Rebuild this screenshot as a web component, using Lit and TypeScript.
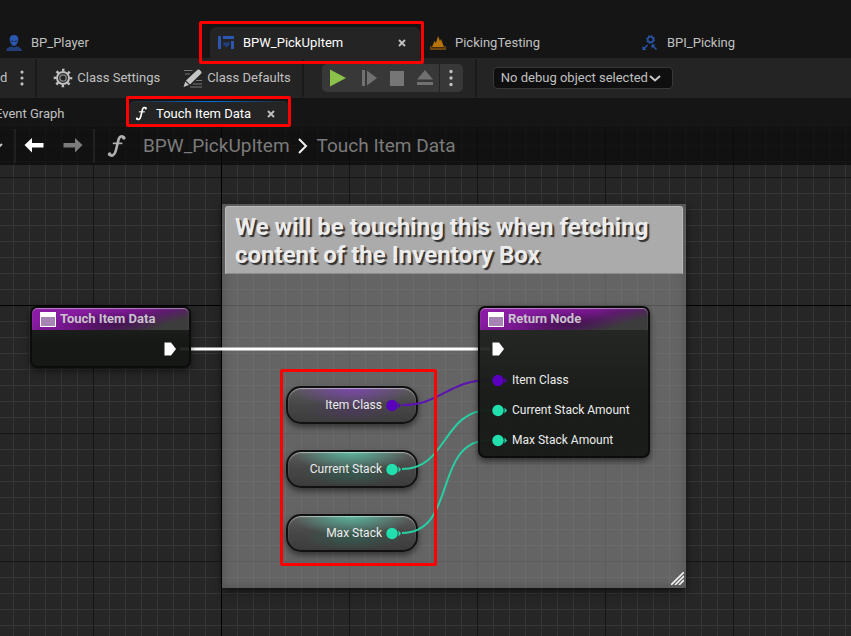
import { LitElement, html, css, svg, nothing } from "lit";
import { customElement, property } from "lit/decorators.js";

const icons: Record<string, unknown> = {
  person: svg`<path d="M8 0c3 0 4.600 2 4.300 4.800C12 8 10 11 8 11S4 8 3.700 4.800C3.400 2 5 0 8 0Z" fill="#2b57b0"/><path d="M5 5.400 7.300 6v.8L5.400 6.500ZM11 5.400 8.700 6v.8l1.900-.3Z" fill="#151515"/><path d="M0 16c.3-3 2.500-4 5.300-4.800Q8 13.500 10.700 11.200C13.500 12 15.700 13 16 16Z" fill="#223d77"/>`,
  widget: svg`<path d="M0 1h3v13H0ZM5 1h11v3H5ZM13 6h3v8h-3Z" fill="#2b57b0"/><path d="M8.500 12.500 5.300 9.500c-.8-1 0-2.500 1.300-2.500 1 0 1.500.5 1.900 1 .4-.5.900-1 1.900-1 1.300 0 2.100 1.500 1.300 2.500Z" fill="#223d77"/>`,
  level: svg`<path d="M2 12 4.500 6l1.500 2L8 1l2 5 1-2 3 8Z" fill="#b8730c"/><path d="M0 11h1.500v1.500h13V11H16v4H0Z" fill="#6b4510"/>`,
  iface: svg`<circle cx="8.500" cy="4.500" r="2.800" fill="none" stroke="#2b57b0" stroke-width="1.400"/><circle cx="8.500" cy="4.500" r="3.900" fill="none" stroke="#2b57b0" stroke-width="1.200" stroke-dasharray="1.500 1.563"/><path d="M5.500 10 2.500 13M11 11l3.500 3.500" stroke="#2b57b0" stroke-width="1.400"/><path d="M.5 11v4h4ZM9.500 9.500h4L9.500 13.500Z" fill="#2b57b0"/>`,
  gear: svg`<g fill="none" stroke="#c0c0c0"><circle cx="10" cy="10" r="6" stroke-width="2"/><circle cx="10" cy="10" r="3.200" stroke-width="1.300" stroke="#8a8a8a"/><circle cx="10" cy="10" r="8" stroke-width="2.600" stroke-dasharray="2.500 3.783" stroke-dashoffset="1.250"/></g>`,
  pencil: svg`<path d="M1 2.500h8.500M2 6h5M13 12.500h6M10 16h9M7 19h12" stroke="#777" stroke-width="1"/><path d="M14.500 1.800q1-.8 2 0l1.700 1.700q.8 1 0 2L7 16.500l-4-4ZM2.300 13.500l3.700 3.600L.5 19Z" fill="#c4c4c4"/>`,
  play: svg`<path d="M2 1.500 18 10 2 18.500Z" fill="#8bc24a"/>`,
  step: svg`<path d="M3 2h3v16H3ZM8 2.500 18 10 8 17.500Z" fill="#717171"/>`,
  stop: svg`<path d="M3 3h14v15H3Z" fill="#767676"/>`,
  eject: svg`<path d="M10 2l8 9.500H2ZM2 14h16v3H2Z" fill="#717171"/>`,
  dots: svg`<circle cx="10" cy="3.500" r="1.700" fill="#c0c0c0"/><circle cx="10" cy="10" r="1.700" fill="#c0c0c0"/><circle cx="10" cy="16.500" r="1.700" fill="#c0c0c0"/>`,
  close: svg`<path d="m5 5 6 6M11 5l-6 6" stroke="#c0c0c0" stroke-width="1.900"/>`,
  func: svg`<path d="M16 3.200C14.500 1.200 12 1.500 11.200 5L9 14C8 18 5.500 19 3.500 17" fill="none" stroke="currentColor" stroke-width="2.200"/><path d="M6.500 7.800h8" stroke="currentColor" stroke-width="1.400"/><circle cx="15.700" cy="3.300" r="1.500" fill="currentColor"/><circle cx="3.900" cy="16.800" r="1.500" fill="currentColor"/>`,
  back: svg`<path d="M.5 9 8 2v5h11.500v4.500H8v5Z" fill="#fff"/>`,
  forward: svg`<path d="M19.500 9 12 2v5H.5v4.500H12v5Z" fill="#7b7b7b"/>`,
  chevron: svg`<path d="m6 3 7 7-7 7" fill="none" stroke="#f0f0f0" stroke-width="2"/>`,
  down: svg`<path d="m3 6 5 4.500L13 6" fill="none" stroke="#c8c8c8" stroke-width="2"/>`,
  panel: svg`<path d="M0 0h16v15H0Z" fill="#fff"/><path d="M1 5h14v9H1Z" fill="#a583b3"/>`,
  exec: svg`<path d="M.5.500h6.500L12 7l-5 6.500H.5Z" fill="#fff"/>`,
  grip: svg`<path d="M0 13 13 0M4 13l9-9M8 13l5-5" stroke="#f2f2f2" stroke-width="1.600"/>`,
};

const icon = (name: string, w = 20, h = w, box = `0 0 ${w} ${h}`) =>
  html`<svg class="icon" width=${w} height=${h} viewBox=${box} aria-hidden="true">${icons[name]}</svg>`;

const base = css`
  * { box-sizing: border-box; }
  button, select { font: inherit; color: inherit; background: none; border: 0; padding: 0; margin: 0; text-align: left; }
  .icon { display: block; flex: none; }
`;

@customElement("graph-pin")
class GraphPin extends LitElement {
  @property({ reflect: true }) kind = "int";
  @property() label = "";

  static styles = [base, css`
    :host { display: flex; align-items: center; height: 30px; gap: 4px; }
    :host([kind="exec"]) { margin-bottom: 1px; }
    :host([flip]) { flex-direction: row-reverse; }
    .label { font-size: 12px; line-height: 16px; color: #ececec; white-space: nowrap; }
    .int { color: #21e0ae; }
    .class { color: #5800bd; }
  `];

  render() {
    if (this.kind === "exec") return icon("exec", 13, 14);
    return html`
      <svg class="icon ${this.kind}" width="16" height="14" viewBox="0 0 16 14" aria-hidden="true">
        <circle cx="6" cy="7.500" r="5.700" fill="currentColor" />
        <path d="M12.500 4.500 15 7.500l-2.500 3Z" fill="currentColor" />
      </svg>
      <span class="label">${this.label}</span>`;
  }
}

@customElement("function-node")
class FunctionNode extends LitElement {
  @property() heading = "";

  static styles = [base, css`
    :host {
      display: block; overflow: hidden; border-radius: 7px; border: 2px solid #0c0c0c;
      background: linear-gradient(rgba(36, 38, 36, 0.93), rgba(20, 23, 20, 0.93) 60%);
      box-shadow: 0 3px 6px rgba(0, 0, 0, 0.55);
    }
    .head {
      display: flex; align-items: center; gap: 4px; height: 22px; padding: 0 8px;
      border-radius: 5px 5px 0 0;
      background:
        radial-gradient(ellipse 56px 12px at 50% 70%, rgba(45, 12, 55, 0.55), transparent),
        linear-gradient(165deg, #8a1ca4 20%, #74168a 50%, #5b1c6b 62%, #3c3c3c 82%);
      box-shadow: inset 0 1px 1px rgba(255, 255, 255, 0.45);
      color: #c9c3cc; font-weight: 700; font-size: 13px; line-height: 16px; white-space: nowrap;
    }
    .body { padding: 4px 12px; }
  `];

  render() {
    return html`
      <div class="head">${icon("panel", 16, 15)}<span>${this.heading}</span></div>
      <div class="body"><slot></slot></div>`;
  }
}

@customElement("app-root")
class AppRoot extends LitElement {
  static styles = [base, css`
    :host {
      display: flex; flex-direction: column; position: relative; min-height: 100vh; overflow: hidden;
      background: #151515; color: #c0c0c0; font: 13px/16px Roboto, "Noto Sans", sans-serif;
    }
    .titlebar { display: flex; align-items: flex-end; height: 58px; overflow: hidden; margin-left: -2px; }
    .doc {
      display: flex; align-items: center; gap: 9px; flex: none; width: 212px; height: 31px; padding: 0 8px;
      border-radius: 6px 6px 0 0;
    }
    .doc.active, .sub.active { background: #242424; color: #fff; }
    .doc.active { width: 210px; margin-right: 2px; padding-right: 10px; }
    .grow { flex: 1; }
    .toolbar { display: flex; align-items: center; height: 40px; background: #242424; white-space: nowrap; overflow: hidden; }
    .toolbar button { display: flex; align-items: center; gap: 4px; }
    .more { margin: 0 3px 0 5px; }
    .rule { width: 2px; height: 38px; background: #1a1a1a; flex: none; }
    .tools { display: flex; gap: 23px; padding: 0 11px 0 16px; }
    .transport { display: flex; height: 28px; margin: 0 12px 0 18px; border-radius: 5px; background: #383838; overflow: hidden; }
    .transport button { justify-content: center; width: 28px; }
    .transport .first { width: 33px; }
    .transport .last { width: 24px; border-left: 1px solid #242424; }
    .debug { position: relative; margin-left: 16px; }
    .debug select {
      appearance: none; display: block; width: 180px; height: 22px; padding: 0 7px; border: 1px solid #383838; border-radius: 4px;
      background: #0f0f0f;
    }
    .debug .icon { position: absolute; right: 10px; top: 3px; pointer-events: none; }
    .subtabs { display: flex; align-items: flex-end; height: 29px; padding-bottom: 1px; white-space: nowrap; }
    .sub { display: flex; align-items: center; height: 25px; }
    .sub.first { width: 134px; margin-left: -5px; }
    .sub.active {
      width: 160px; padding: 0 10px 0 5px; gap: 7px; border-radius: 5px 5px 0 0;
      background: linear-gradient(90deg, #242424, #0070e0 50%, #242424) top / 100% 1px no-repeat, #242424;
    }
    .graph {
      position: relative; flex: 1; min-height: 509px; overflow: hidden; background-color: #262626;
      background-image:
        linear-gradient(#000, #000), linear-gradient(#000, #000),
        linear-gradient(90deg, #151515 1px, transparent 1px), linear-gradient(#151515 1px, transparent 1px),
        linear-gradient(90deg, #353535 1px, transparent 1px), linear-gradient(#353535 1px, transparent 1px);
      background-size: 1px 100%, 100% 1px, 128px 128px, 128px 128px, 16px 16px, 16px 16px;
      background-position: 221px 0, 0 178px, 93px 50px, 93px 50px, 13px 2px, 13px 2px;
      background-repeat: no-repeat, no-repeat, repeat, repeat, repeat, repeat;
    }
    .crumbs {
      position: relative; display: flex; align-items: center; height: 38px; background: rgba(8, 8, 8, 0.7); color: #7b7b7b;
      font-size: 19px; line-height: 24px; white-space: nowrap; overflow: hidden;
    }
    .crumbs .rule { height: 34px; background: #202020; }
    .nav { display: flex; gap: 19px; padding: 0 10px 0 8px; }
    .clip { width: 14px; margin-left: -11px; margin-right: 11px; }
    .fn { color: #b0b0b0; margin: 0 14px 0 10px; }
    .crumbs a { color: inherit; text-decoration: none; }
    .sep { margin: 0 4px 0 3px; }
    .node, .comment, .wires, .mark { position: absolute; }
    .comment {
      left: 222px; top: 77px; width: 464px; height: 384px; padding: 2px 3px;
      background: rgba(150, 150, 150, 0.56);
      box-shadow: inset 0 0 8px rgba(50, 50, 50, 0.45), 0 3px 8px rgba(0, 0, 0, 0.6);
    }
    .comment h2 {
      margin: 0; padding: 6px 9px 4px; background: #ababab; border: 1px solid #bcbcbc; border-bottom-color: #8d8d8d; border-radius: 3px 3px 0 0;
      color: #ececec; font-size: 24px; line-height: 28px; font-weight: 700; text-shadow: 2px 2px 1px #303030;
    }
    .grip { position: absolute; right: 2px; bottom: 3px; }
    .wires { left: 0; top: 0; pointer-events: none; }
    .entry { left: 30px; top: 179px; width: 161px; height: 62px; }
    .return { left: 478px; top: 179px; width: 172px; height: 152px; }
    .out { justify-content: flex-end; }
    .var {
      left: 286px; width: 132px; height: 38px; padding: 2px 14px; border: 2px solid #111; border-radius: 15px;
      background:
        radial-gradient(ellipse 60px 20px at 50% 0, var(--tint), transparent),
        radial-gradient(ellipse 50px 12px at 50% 65%, var(--glow), transparent),
        linear-gradient(#5c5c5c, #484848 45%, #3c3c3c);
      box-shadow: inset 0 1px 1px rgba(255, 255, 255, 0.5), 0 3px 6px rgba(0, 0, 0, 0.5);
    }
    .class { --tint: #7a45ab; --glow: #4a3a58; top: 259px; }
    .current { --tint: #58b39b; --glow: #34584e; top: 323px; }
    .max { --tint: #58b39b; --glow: #34584e; top: 387px; }
    .mark { border: 3px solid #f00; border-radius: 2px; pointer-events: none; }
    .m1 { left: 199px; top: 21px; width: 225px; height: 43px; }
    .m2 { left: 126px; top: 96px; width: 165px; height: 31px; }
    .m3 { left: 280px; top: 369px; width: 157px; height: 197px; }
  `];

  private tab(label: string, glyph: string, active = false) {
    return html`<div class="doc ${active ? "active" : ""}">
      ${icon(glyph, 16)}<span class="grow">${label}</span>
      ${active ? html`<button aria-label="Close">${icon("close", 16)}</button>` : nothing}
    </div>`;
  }

  render() {
    return html`
      <nav class="titlebar">
        ${this.tab("BP_Player", "person")}${this.tab("BPW_PickUpItem", "widget", true)}
        ${this.tab("PickingTesting", "level")}${this.tab("BPI_Picking", "iface")}
      </nav>
      <div class="toolbar">
        <span>d</span>
        <button class="more" aria-label="More">${icon("dots", 20, 20, "0 -1 20 22")}</button>
        <span class="rule"></span>
        <div class="tools">
          <button>${icon("gear")}Class Settings</button>
          <button>${icon("pencil")}Class Defaults</button>
        </div>
        <span class="rule"></span>
        <div class="transport">
          <button class="first" aria-label="Play">${icon("play")}</button>
          <button aria-label="Step">${icon("step")}</button>
          <button aria-label="Stop">${icon("stop")}</button>
          <button aria-label="Eject">${icon("eject")}</button>
          <button class="last" aria-label="Options">${icon("dots")}</button>
        </div>
        <span class="rule"></span>
        <div class="debug">
          <select aria-label="Debug object"><option>No debug object selected</option></select>
          ${icon("down", 16)}
        </div>
      </div>
      <nav class="subtabs">
        <div class="sub first">Event Graph</div>
        <div class="sub active">
          ${icon("func", 15, 15, "0 0 20 20")}<span class="grow">Touch Item Data</span>
          <button aria-label="Close">${icon("close", 16)}</button>
        </div>
      </nav>
      <main class="graph">
        <section class="comment">
          <h2>We will be touching this when fetching content of the Inventory Box</h2>
          <span class="grip">${icon("grip", 13)}</span>
        </section>
        <div class="node var class"><graph-pin flip kind="class" label="Item Class"></graph-pin></div>
        <div class="node var current"><graph-pin flip label="Current Stack"></graph-pin></div>
        <div class="node var max"><graph-pin flip label="Max Stack"></graph-pin></div>
        <svg class="wires" width="100%" height="100%" fill="none" stroke-width="2" aria-hidden="true">
          <path d="M180 222H490" stroke="#fff" stroke-width="3" />
          <path d="M402 278C442 278 448 253 490 253" stroke="#5b14b0" />
          <path d="M402 342C448 342 442 283 490 283" stroke="#27cfa2" />
          <path d="M402 406C458 406 432 313 490 313" stroke="#27cfa2" />
        </svg>
        <function-node class="node entry" heading="Touch Item Data">
          <graph-pin class="out" kind="exec"></graph-pin>
        </function-node>
        <function-node class="node return" heading="Return Node">
          <graph-pin kind="exec"></graph-pin>
          <graph-pin kind="class" label="Item Class"></graph-pin>
          <graph-pin label="Current Stack Amount"></graph-pin>
          <graph-pin label="Max Stack Amount"></graph-pin>
        </function-node>
        <div class="crumbs">
          <span class="clip">${icon("down", 16)}</span>
          <span class="rule"></span>
          <div class="nav">
            <button aria-label="Back">${icon("back")}</button>
            <button aria-label="Forward">${icon("forward")}</button>
          </div>
          <span class="rule"></span>
          <span class="fn">${icon("func", 24, 24, "0 0 20 20")}</span>
          <a href="#">BPW_PickUpItem</a>
          <span class="sep">${icon("chevron")}</span>
          <a href="#">Touch Item Data</a>
        </div>
      </main>
      <div class="mark m1"></div>
      <div class="mark m2"></div>
      <div class="mark m3"></div>
    `;
  }
}
